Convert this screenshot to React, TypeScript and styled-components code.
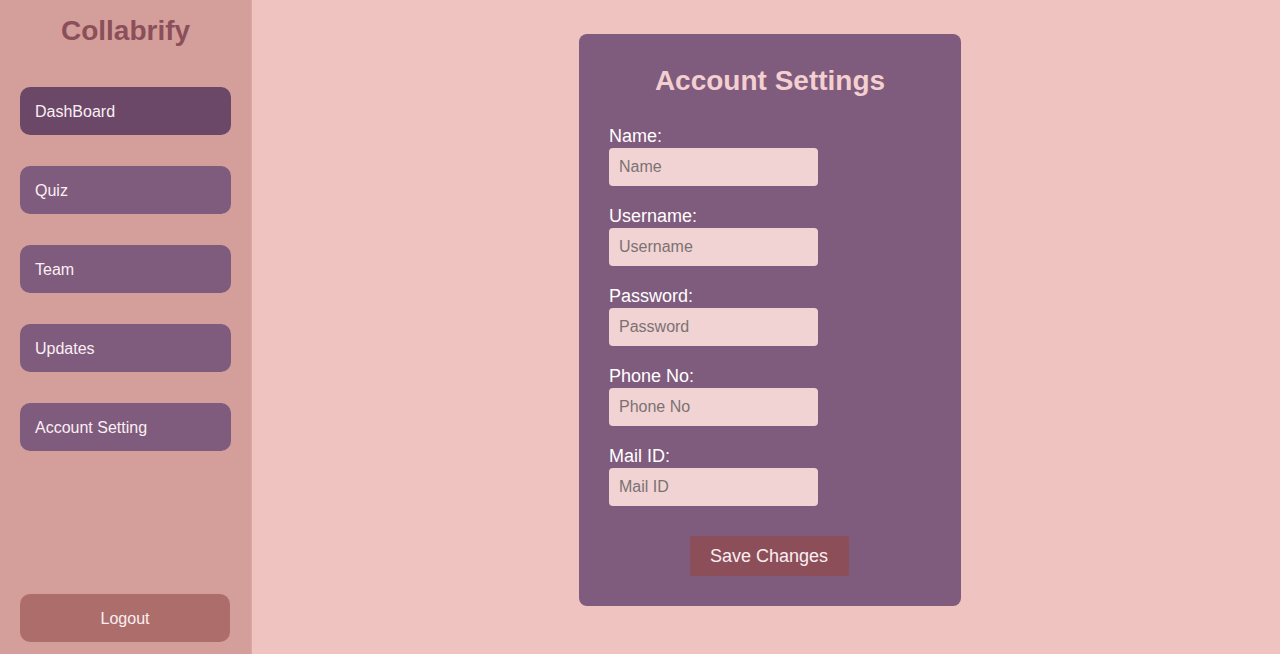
import React from "react";
import styled, { createGlobalStyle } from "styled-components";

const Global = createGlobalStyle`
  html, body { margin: 0; padding: 0; }
  body { font-family: "Liberation Sans", Arial, sans-serif; background: #efc3bf; }
  * { box-sizing: border-box; }
`;

const Page = styled.div`
  display: flex;
  width: 1280px;
  height: 654px;
  overflow: hidden;
  background: #efc3bf;
`;

const Sidebar = styled.aside`
  width: 252px;
  flex: 0 0 252px;
  background: #d49f9a;
  border-right: 1px solid #daa8a3;
  padding: 15px 20px 12px;
  display: flex;
  flex-direction: column;
`;

const Brand = styled.h1`
  margin: 0 0 40px;
  font-size: 28px;
  line-height: 32px;
  font-weight: 700;
  text-align: center;
  color: #8b4f5a;
`;

const Nav = styled.nav`
  display: flex;
  flex-direction: column;
  gap: 31px;
`;

const NavItem = styled.div<{ $active?: boolean }>`
  height: 48px;
  width: 211px;
  border-radius: 10px;
  background: ${(p) => (p.$active ? "#6b4868" : "#7f5b7d")};
  color: #fbeff3;
  font-size: 16px;
  display: flex;
  align-items: center;
  padding: 2px 0 0 15px;
`;

const Logout = styled.button`
  margin-top: auto;
  height: 48px;
  width: 210px;
  border: none;
  border-radius: 10px;
  background: #ad6e6b;
  color: #fbeff3;
  font-family: inherit;
  font-size: 16px;
  padding: 2px 0 0;
`;

const Main = styled.main`
  flex: 1;
  display: flex;
  justify-content: center;
  align-items: flex-start;
  padding: 34px 0 0 8px;
`;

const Card = styled.form`
  width: 382px;
  background: #7f5b7d;
  border-radius: 8px;
  padding: 31px 30px 30px;
  display: flex;
  flex-direction: column;
`;

const Title = styled.h2`
  margin: 0 0 29px;
  font-size: 28px;
  line-height: 32px;
  font-weight: 700;
  text-align: center;
  color: #f3cfd0;
`;

const Field = styled.div`
  display: flex;
  flex-direction: column;
  align-items: flex-start;
  margin-bottom: 19px;
`;

const Label = styled.label`
  font-size: 18px;
  line-height: 20px;
  color: #ffffff;
  margin-bottom: 2px;
`;

const Input = styled.input`
  width: 209px;
  height: 38px;
  border: none;
  border-radius: 4px;
  background: #f2d3d4;
  padding: 0 10px;
  margin-bottom: 1px;
  font-family: inherit;
  font-size: 16px;
  color: #333;
  outline: none;
  &::placeholder { color: #7a7272; }
`;

const Save = styled.button`
  align-self: center;
  margin: 10px 2px 0 0;
  width: 159px;
  height: 40px;
  border: none;
  border-radius: 3px;
  background: #8c4e59;
  color: #fbeff3;
  font-family: inherit;
  font-size: 18px;
`;

const fields = ["Name", "Username", "Password", "Phone No", "Mail ID"];
const navs = ["DashBoard", "Quiz", "Team", "Updates", "Account Setting"];

export default function App() {
  return (
    <Page>
      <Global />
      <Sidebar>
        <Brand>Collabrify</Brand>
        <Nav>
          {navs.map((n, i) => (
            <NavItem key={n} $active={i === 0}>
              {n}
            </NavItem>
          ))}
        </Nav>
        <Logout>Logout</Logout>
      </Sidebar>
      <Main>
        <Card onSubmit={(e) => e.preventDefault()}>
          <Title>Account Settings</Title>
          {fields.map((f) => (
            <Field key={f}>
              <Label>{f}:</Label>
              <Input placeholder={f} type={f === "Password" ? "password" : "text"} />
            </Field>
          ))}
          <Save type="submit">Save Changes</Save>
        </Card>
      </Main>
    </Page>
  );
}
